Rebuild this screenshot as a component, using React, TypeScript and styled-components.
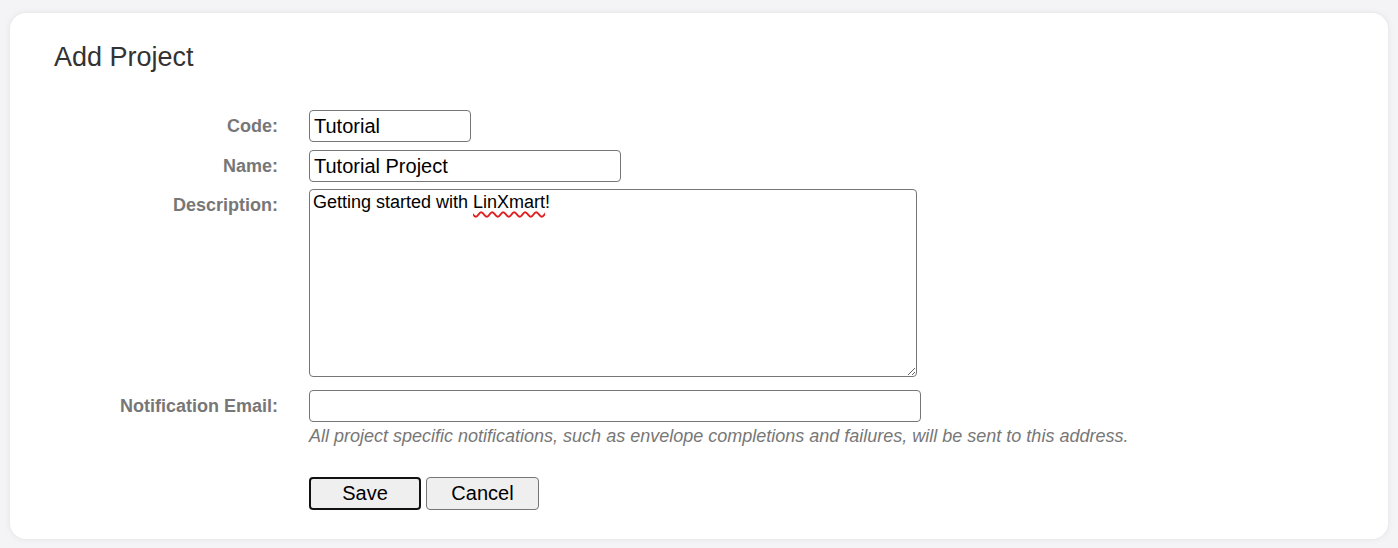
import React from "react";
import styled, { createGlobalStyle } from "styled-components";

const GlobalStyle = createGlobalStyle`
  html, body {
    margin: 0;
    padding: 0;
    background: #f4f4f6;
    font-family: "Liberation Sans", Arial, sans-serif;
  }
`;

const Page = styled.div`
  padding: 13px 10px 9px 10px;
  box-sizing: border-box;
  min-height: 548px;
`;

const Card = styled.section`
  background: #ffffff;
  border-radius: 16px;
  box-shadow: 0 0 6px rgba(0, 0, 0, 0.08);
  padding: 29px 44px 0 44px;
  height: 526px;
  box-sizing: border-box;
`;

const Title = styled.h1`
  margin: 0;
  font-size: 27px;
  font-weight: normal;
  color: #333333;
  line-height: 30px;
`;

const Form = styled.form`
  margin-top: 38px;
  display: flex;
  flex-direction: column;
`;

const Row = styled.div<{ $gap?: number }>`
  display: grid;
  grid-template-columns: 224px 1fr;
  column-gap: 31px;
  margin-top: ${(p) => p.$gap ?? 0}px;
`;

const Label = styled.label<{ $pad?: number }>`
  text-align: right;
  font-weight: bold;
  font-size: 18px;
  line-height: 21px;
  color: #777777;
  padding-top: ${(p) => p.$pad ?? 6}px;
`;

const Field = styled.div`
  display: flex;
  flex-direction: column;
  align-items: flex-start;
`;

const TextInput = styled.input<{ $w: number }>`
  width: ${(p) => p.$w}px;
  height: 32px;
  box-sizing: border-box;
  border: 1px solid #767676;
  border-radius: 4px;
  padding: 0 4px;
  font-family: "Liberation Sans", Arial, sans-serif;
  font-size: 20px;
  color: #000;
  background: #fff;
  outline: none;
`;

const AreaWrap = styled.div`
  position: relative;
  width: 608px;
  height: 188px;
`;

const TextArea = styled.textarea`
  width: 608px;
  height: 188px;
  box-sizing: border-box;
  border: 1px solid #767676;
  border-radius: 4px;
  padding: 2px 3px;
  font-family: "Liberation Sans", Arial, sans-serif;
  font-size: 18px;
  line-height: 21px;
  color: #000;
  background: #fff;
  outline: none;
  display: block;
`;

const SpellOverlay = styled.div`
  position: absolute;
  left: 4px;
  top: 3px;
  font-family: "Liberation Sans", Arial, sans-serif;
  font-size: 18px;
  line-height: 21px;
  color: transparent;
  pointer-events: none;
  white-space: pre;
`;

const Misspelled = styled.span`
  text-decoration: underline wavy #e02020;
  text-decoration-thickness: 1.5px;
  text-underline-offset: 3px;
`;

const Help = styled.div`
  margin-top: 4px;
  font-size: 18px;
  line-height: 21px;
  font-style: italic;
  color: #777777;
`;

const Buttons = styled.div`
  display: flex;
  gap: 5px;
`;

const Button = styled.button<{ $primary?: boolean; $w: number }>`
  width: ${(p) => p.$w}px;
  height: 33px;
  box-sizing: border-box;
  background: #efefef;
  border: ${(p) => (p.$primary ? "2px solid #111111" : "1px solid #767676")};
  border-radius: 4px;
  font-family: "Liberation Sans", Arial, sans-serif;
  font-size: 20px;
  color: #000;
  padding: 0;
  cursor: pointer;
`;

export default function App() {
  return (
    <>
      <GlobalStyle />
      <Page>
        <Card>
          <Title>Add Project</Title>
          <Form onSubmit={(e) => e.preventDefault()}>
            <Row>
              <Label htmlFor="code">Code:</Label>
              <Field>
                <TextInput id="code" $w={162} defaultValue="Tutorial" />
              </Field>
            </Row>
            <Row $gap={8}>
              <Label htmlFor="name">Name:</Label>
              <Field>
                <TextInput id="name" $w={312} defaultValue="Tutorial Project" />
              </Field>
            </Row>
            <Row $gap={7}>
              <Label htmlFor="desc" $pad={6}>Description:</Label>
              <Field>
                <AreaWrap>
                  <TextArea
                    id="desc"
                    spellCheck={false}
                    defaultValue="Getting started with LinXmart!"
                  />
                  <SpellOverlay aria-hidden>
                    {"Getting started with "}
                    <Misspelled>LinXmart</Misspelled>!
                  </SpellOverlay>
                </AreaWrap>
              </Field>
            </Row>
            <Row $gap={13}>
              <Label htmlFor="email">Notification Email:</Label>
              <Field>
                <TextInput id="email" $w={612} defaultValue="" />
                <Help>
                  All project specific notifications, such as envelope completions and failures, will be sent to this address.
                </Help>
              </Field>
            </Row>
            <Row $gap={30}>
              <span />
              <Buttons>
                <Button type="submit" $primary $w={112}>Save</Button>
                <Button type="button" $w={113}>Cancel</Button>
              </Buttons>
            </Row>
          </Form>
        </Card>
      </Page>
    </>
  );
}
